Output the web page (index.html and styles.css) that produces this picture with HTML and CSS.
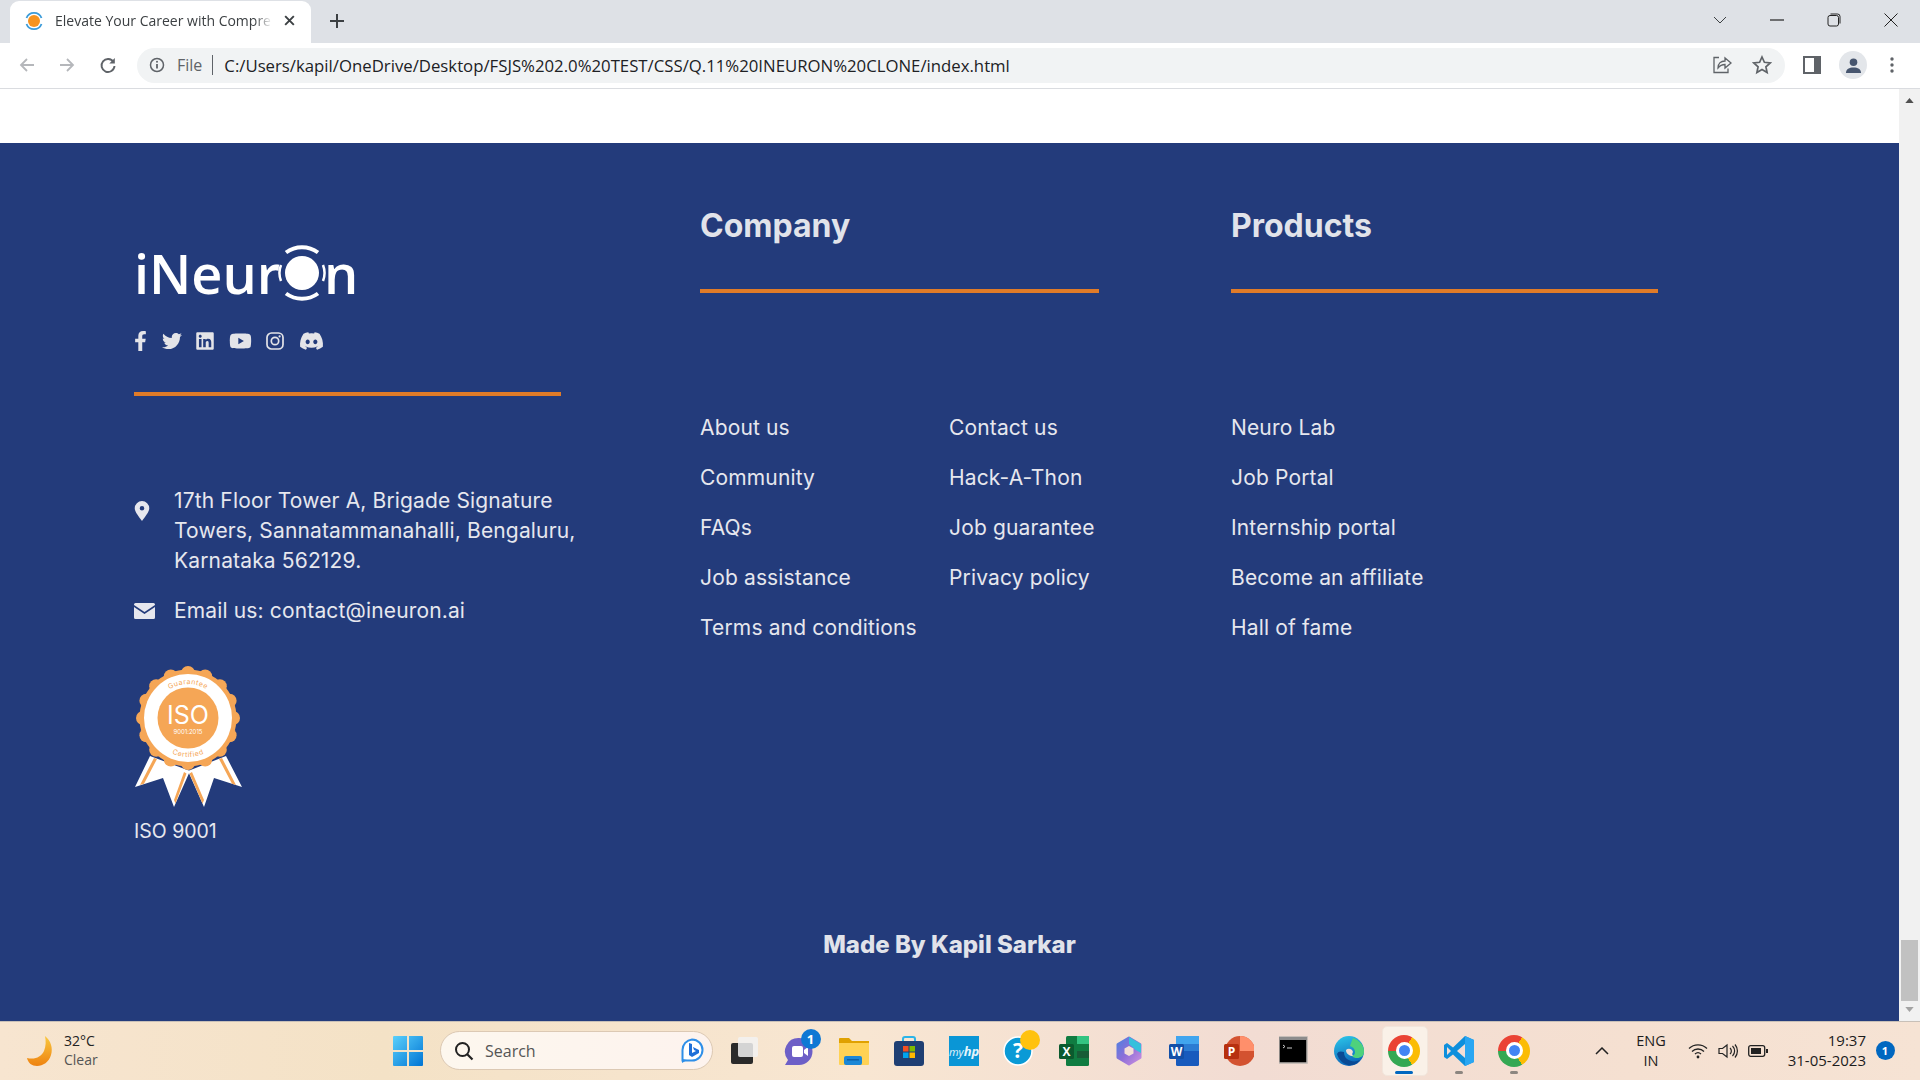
FILE: index.html
```html
<!DOCTYPE html>
<html lang="en">
<head>
<meta charset="utf-8">
<title>Elevate Your Career with Comprehensive Courses</title>
<link rel="stylesheet" href="styles.css">
</head>
<body>
<div class="tabstrip">
  <div class="tab">
    <svg class="favicon" viewBox="0 0 20 20"><circle cx="10" cy="10" r="6" fill="#f7931e"/><path d="M2.500 7A8 8 0 0 1 17.500 7M17.500 13A8 8 0 0 1 2.500 13" fill="none" stroke="#3b9bd9" stroke-width="1.800"/></svg>
    <span class="tab-title">Elevate Your Career with Compre</span>
    <svg class="tab-close" viewBox="0 0 12 12"><path d="M2 2l8 8M10 2l-8 8" stroke="#3c4043" stroke-width="1.800"/></svg>
  </div>
  <svg class="newtab" viewBox="0 0 14 14"><path d="M7 0v14M0 7h14" stroke="#3c4043" stroke-width="2"/></svg>
  <div class="win">
    <svg class="win-ico chev" viewBox="0 0 14 8"><path d="M1 1l6 6 6-6" fill="none" stroke="#3c4043"/></svg>
    <svg class="win-ico" viewBox="0 0 14 14"><path d="M0 7h14" stroke="#222" stroke-width="1.200"/></svg>
    <svg class="win-ico" viewBox="0 0 14 14"><rect x="1" y="2.500" width="10.500" height="10.500" rx="2" fill="none" stroke="#222"/><path d="M3.500 1h7a2.500 2.500 0 0 1 2.500 2.500v7" fill="none" stroke="#222"/></svg>
    <svg class="win-ico" viewBox="0 0 14 14"><path d="M0.500 0.500l13 13M13.500 0.500l-13 13" stroke="#222"/></svg>
  </div>
</div>
<div class="toolbar">
  <svg class="nav nav-back" viewBox="0 0 18 18"><path d="M16 9H3M9 3L3 9l6 6" fill="none" stroke="#b5b7bb" stroke-width="1.800"/></svg>
  <svg class="nav nav-fwd" viewBox="0 0 18 18"><path d="M2 9h13M9 3l6 6-6 6" fill="none" stroke="#b5b7bb" stroke-width="1.800"/></svg>
  <svg class="nav nav-reload" viewBox="0 0 18 18"><path d="M14.500 6A6.500 6.500 0 1 0 15.500 10" fill="none" stroke="#5f6368" stroke-width="1.900"/><path d="M15.800 2v5.500h-5.500z" fill="#5f6368"/></svg>
  <div class="omnibox">
    <svg class="info" viewBox="0 0 16 16"><circle cx="8" cy="8" r="6.500" fill="none" stroke="#5f6368" stroke-width="1.500"/><path d="M8 7v4.500" stroke="#5f6368" stroke-width="1.800"/><circle cx="8" cy="4.800" r="1" fill="#5f6368"/></svg>
    <span class="file">File</span>
    <span class="sep"></span>
    <span class="url">C:/Users/kapil/OneDrive/Desktop/FSJS%202.0%20TEST/CSS/Q.11%20INEURON%20CLONE/index.html</span>
    <svg class="omni-ico share" viewBox="0 0 20 20"><path d="M7 2.500H2v15h14v-4" fill="none" stroke="#5f6368" stroke-width="1.300"/><path d="M6 13c0-5 3-7 7-7V3l6 5-6 5V9.500C10 9.500 8 10.500 6 13z" fill="none" stroke="#5f6368" stroke-width="1.300"/></svg>
    <svg class="omni-ico star" viewBox="0 0 20 20"><path d="M10 2l2.400 5.300 5.800.6-4.300 3.900 1.200 5.700L10 14.600 4.900 17.500l1.200-5.700L1.800 7.900l5.800-.6z" fill="none" stroke="#5f6368" stroke-width="1.700"/></svg>
  </div>
  <div class="tool-right">
    <svg class="panel" viewBox="0 0 18 18"><rect width="18" height="18" fill="#5f6368"/><rect x="2" y="2" width="9" height="14" fill="#fff"/></svg>
    <div class="avatar"><svg viewBox="0 0 18 18"><circle cx="9" cy="5.500" r="4" fill="#47566f"/><path d="M1 17c0-4.500 3.500-6 8-6s8 1.500 8 6z" fill="#47566f"/></svg></div>
    <svg class="menu" viewBox="0 0 4 16"><circle cx="2" cy="2" r="1.700" fill="#5f6368"/><circle cx="2" cy="8" r="1.700" fill="#5f6368"/><circle cx="2" cy="14" r="1.700" fill="#5f6368"/></svg>
  </div>
</div>
<div class="viewport">
  <main class="page">
    <div class="page-top"></div>
    <footer class="footer">
      <div class="cols">
        <div class="col-brand">
          <div class="logo">iNeur<svg class="logo-o" viewBox="0 0 56 56"><circle cx="28" cy="28" r="17" fill="#fff"/><path d="M12 7.500A27 27 0 0 1 44 7.500M44 48.500A27 27 0 0 1 12 48.500" fill="none" stroke="#fff" stroke-width="4"/><path d="M7 20a22 22 0 0 0 0 16M49 20a22 22 0 0 1 0 16" fill="none" stroke="#fff" stroke-width="2.500"/></svg>n</div>
          <div class="social">
            <svg class="s-fb" viewBox="0 0 320 512"><path d="M279.14 288l14.22-92.66h-88.91v-60.13c0-25.35 12.42-50.06 52.24-50.06h40.42V6.26S260.43 0 225.36 0c-73.22 0-121.08 44.38-121.08 124.72v70.62H22.89V288h81.39v224h100.17V288z"/></svg>
            <svg class="s-tw" viewBox="0 0 512 512"><path d="M459.37 151.716c.325 4.548.325 9.097.325 13.645 0 138.72-105.583 298.558-298.558 298.558-59.452 0-114.68-17.219-161.137-47.106 8.447.974 16.568 1.299 25.34 1.299 49.055 0 94.213-16.568 130.274-44.832-46.132-.975-84.792-31.188-98.112-72.772 6.498.974 12.995 1.624 19.818 1.624 9.421 0 18.843-1.3 27.614-3.573-48.081-9.747-84.143-51.98-84.143-102.985v-1.299c13.969 7.797 30.214 12.67 47.431 13.319-28.264-18.843-46.781-51.005-46.781-87.391 0-19.492 5.197-37.36 14.294-52.954 51.655 63.675 129.3 105.258 216.365 109.807-1.624-7.797-2.599-15.918-2.599-24.04 0-57.828 46.782-104.934 104.934-104.934 30.213 0 57.502 12.67 76.67 33.137 23.715-4.548 46.456-13.32 66.599-25.34-7.798 24.366-24.366 44.833-46.132 57.827 21.117-2.273 41.584-8.122 60.426-16.243-14.292 20.791-32.161 39.308-52.628 54.253z"/></svg>
            <svg class="s-li" viewBox="0 0 448 512"><path d="M416 32H31.900C14.300 32 0 46.500 0 64.300v383.400C0 465.500 14.300 480 31.900 480H416c17.600 0 32-14.500 32-32.300V64.300c0-17.800-14.400-32.300-32-32.300zM135.400 416H69V202.200h66.500V416zm-33.200-243c-21.300 0-38.500-17.300-38.500-38.500S80.900 96 102.200 96c21.200 0 38.500 17.300 38.500 38.500 0 21.300-17.200 38.500-38.500 38.500zm282.100 243h-66.400V312c0-24.800-.5-56.700-34.500-56.700-34.600 0-39.900 27-39.900 54.900V416h-66.400V202.200h63.700v29.200h.9c8.900-16.800 30.600-34.500 62.900-34.500 67.200 0 79.700 44.300 79.700 101.900V416z"/></svg>
            <svg class="s-yt" viewBox="0 0 576 512"><path d="M549.655 124.083c-6.281-23.65-24.787-42.276-48.284-48.597C458.781 64 288 64 288 64S117.22 64 74.629 75.486c-23.497 6.322-42.003 24.947-48.284 48.597-11.412 42.867-11.412 132.305-11.412 132.305s0 89.438 11.412 132.305c6.281 23.65 24.787 41.5 48.284 47.821C117.22 448 288 448 288 448s170.78 0 213.371-11.486c23.497-6.321 42.003-24.171 48.284-47.821 11.412-42.867 11.412-132.305 11.412-132.305s0-89.438-11.412-132.305zm-317.51 213.508V175.185l142.739 81.205-142.739 81.201z"/></svg>
            <svg class="s-ig" viewBox="0 0 18 18"><rect x="1" y="1" width="16" height="16" rx="4.500" fill="none" stroke="#e4e4e8" stroke-width="1.700"/><circle cx="9" cy="9" r="3.700" fill="none" stroke="#e4e4e8" stroke-width="1.700"/><circle cx="13.600" cy="4.400" r="1.100" fill="#e4e4e8"/></svg>
            <svg class="s-dc" viewBox="0 0 640 512"><path d="M524.531,69.836a1.5,1.5,0,0,0-.764-.7A485.065,485.065,0,0,0,404.081,32.03a1.816,1.816,0,0,0-1.923.91,337.461,337.461,0,0,0-14.9,30.6,447.848,447.848,0,0,0-134.426,0,309.541,309.541,0,0,0-15.135-30.6,1.89,1.89,0,0,0-1.924-.91A483.689,483.689,0,0,0,116.085,69.137a1.712,1.712,0,0,0-.788.676C39.068,183.651,18.186,294.69,28.43,404.354a2.016,2.016,0,0,0,.765,1.375A487.666,487.666,0,0,0,176.02,479.918a1.9,1.9,0,0,0,2.063-.676A348.2,348.2,0,0,0,208.12,430.4a1.86,1.86,0,0,0-1.019-2.588,321.173,321.173,0,0,1-45.868-21.853,1.885,1.885,0,0,1-.185-3.126c3.082-2.309,6.166-4.711,9.109-7.137a1.819,1.819,0,0,1,1.9-.256c96.229,43.917,200.41,43.917,295.5,0a1.812,1.812,0,0,1,1.924.233c2.944,2.426,6.027,4.851,9.132,7.16a1.884,1.884,0,0,1-.162,3.126,301.407,301.407,0,0,1-45.89,21.83,1.875,1.875,0,0,0-1,2.611,391.055,391.055,0,0,0,30.014,48.815,1.864,1.864,0,0,0,2.063.7A486.048,486.048,0,0,0,610.7,405.729a1.882,1.882,0,0,0,.765-1.352C623.729,277.594,590.933,167.465,524.531,69.836ZM222.491,337.58c-28.972,0-52.844-26.587-52.844-59.239S193.056,219.1,222.491,219.1c29.665,0,53.306,26.82,52.843,59.239C275.334,310.993,251.924,337.58,222.491,337.58Zm195.38,0c-28.971,0-52.843-26.587-52.843-59.239S388.437,219.1,417.871,219.1c29.667,0,53.307,26.82,52.844,59.239C470.715,310.993,447.538,337.58,417.871,337.58Z"/></svg>
          </div>
          <div class="rule rule-brand"></div>
          <div class="contact contact-addr">
            <svg class="pin" viewBox="0 0 16 22"><path fill-rule="evenodd" d="M8 0a8 8 0 0 1 8 8c0 4-5 10-8 14C5 18 0 12 0 8a8 8 0 0 1 8-8zm0 5.500a2.500 2.500 0 1 0 0 5 2.500 2.500 0 0 0 0-5z"/></svg>
            <p>17th Floor Tower A, Brigade Signature<br>Towers, Sannatammanahalli, Bengaluru,<br>Karnataka 562129.</p>
          </div>
          <div class="contact contact-mail">
            <svg class="mail" viewBox="0 0 21 16"><path d="M1.500 0h18A1.500 1.500 0 0 1 21 1.500v.6L10.500 9 0 2.100v-.6A1.500 1.500 0 0 1 1.500 0z"/><path d="M0 4l10.500 7L21 4v10.500a1.500 1.500 0 0 1-1.500 1.500h-18A1.500 1.500 0 0 1 0 14.500z"/></svg>
            <p>Email us: contact@ineuron.ai</p>
          </div>
          <svg class="iso" viewBox="0 0 108 142">
            <path d="M16 90L1 121l28-9 11 29 16-36z" fill="#fff"/>
            <path d="M92 90l16 31-28-9-10 29-16-36z" fill="#fff"/>
            <path d="M20 92L6 119l4-1.300 13-24.700zM88 92l14 27-4-1.300-13-24.700z" fill="#f5a656"/>
            <path d="M50 106l-10 28 1.500 3.500 11-30zM58 106l12 28-1.500 3.500-13-30z" fill="#f5a656"/>
            <g fill="#f5a656">
              <circle cx="54" cy="52" r="48.500"/>
              <circle cx="54" cy="7" r="7"/><circle cx="71.200" cy="10.400" r="7"/><circle cx="85.800" cy="20.200" r="7"/><circle cx="95.600" cy="34.800" r="7"/><circle cx="99" cy="52" r="7"/><circle cx="95.600" cy="69.200" r="7"/><circle cx="85.800" cy="83.800" r="7"/><circle cx="71.200" cy="93.600" r="7"/><circle cx="54" cy="97" r="7"/><circle cx="36.800" cy="93.600" r="7"/><circle cx="22.200" cy="83.800" r="7"/><circle cx="12.400" cy="69.200" r="7"/><circle cx="9" cy="52" r="7"/><circle cx="12.400" cy="34.800" r="7"/><circle cx="22.200" cy="20.200" r="7"/><circle cx="36.800" cy="10.400" r="7"/>
            </g>
            <circle cx="54" cy="52" r="44" fill="#fff"/>
            <circle cx="54" cy="52" r="30.500" fill="#f5a656"/>
            <defs>
              <path id="arc-top" d="M20 52a34 34 0 0 1 68 0"/>
              <path id="arc-bot" d="M15 52a39 39 0 0 0 78 0"/>
            </defs>
            <text class="iso-arc"><textPath href="#arc-top" startOffset="50%" text-anchor="middle">Guarantee</textPath></text>
            <text class="iso-arc"><textPath href="#arc-bot" startOffset="50%" text-anchor="middle">Certified</textPath></text>
            <text class="iso-big" x="54" y="58" text-anchor="middle">ISO</text>
            <text class="iso-small" x="54" y="68" text-anchor="middle">9001:2015</text>
          </svg>
          <p class="iso-label">ISO 9001</p>
        </div>
        <div class="col-company">
          <h2>Company</h2>
          <div class="rule"></div>
          <div class="links links-two">
            <a>About us</a><a>Contact us</a>
            <a>Community</a><a>Hack-A-Thon</a>
            <a>FAQs</a><a>Job guarantee</a>
            <a>Job assistance</a><a>Privacy policy</a>
            <a>Terms and conditions</a>
          </div>
        </div>
        <div class="col-products">
          <h2>Products</h2>
          <div class="rule"></div>
          <div class="links">
            <a>Neuro Lab</a>
            <a>Job Portal</a>
            <a>Internship portal</a>
            <a>Become an affiliate</a>
            <a>Hall of fame</a>
          </div>
        </div>
      </div>
      <p class="made">Made By Kapil Sarkar</p>
    </footer>
  </main>
  <div class="scrollbar">
    <svg class="arrow" viewBox="0 0 10 6"><path d="M5 0l5 6H0z" fill="#505050"/></svg>
    <div class="thumb"></div>
    <svg class="arrow" viewBox="0 0 10 6"><path d="M5 6L0 0h10z" fill="#a3a3a3"/></svg>
  </div>
</div>
<div class="taskbar">
  <div class="weather">
    <svg class="moon" viewBox="0 0 28 32"><defs><linearGradient id="moon-g" x1="0" y1="0" x2="0" y2="1"><stop offset="0" stop-color="#f9c83f"/><stop offset="1" stop-color="#ee8210"/></linearGradient></defs><path d="M19 1c6 5 8 12 6 19-2 7-8 11-14 11C6 31 2 28 1 23c8 2 14-1 17-7 2-5 2-10 1-15z" fill="url(#moon-g)"/></svg>
    <div class="weather-text"><span class="temp">32°C</span><span class="cond">Clear</span></div>
  </div>
  <div class="start">
    <svg viewBox="0 0 30 30"><defs><linearGradient id="win-g" x1="0" y1="0" x2="1" y2="1"><stop offset="0" stop-color="#5ad0fb"/><stop offset="1" stop-color="#0074d4"/></linearGradient></defs><path d="M0 1a1 1 0 0 1 1-1h13v14H0zM16 0h13a1 1 0 0 1 1 1v13H16zM0 16h14v14H1a1 1 0 0 1-1-1zM16 16h14v13a1 1 0 0 1-1 1H16z" fill="url(#win-g)"/></svg>
  </div>
  <div class="search">
    <svg class="s-glass" viewBox="0 0 20 20"><circle cx="8.500" cy="8.500" r="6.500" fill="none" stroke="#222" stroke-width="2"/><path d="M13 13l5.500 5.500" stroke="#222" stroke-width="2.200"/></svg>
    <span class="s-text">Search</span>
    <svg class="s-bing" viewBox="0 0 24 26"><path d="M12 1.500a10.500 10.500 0 0 1 0 21H2.500V12A10.500 10.500 0 0 1 12 1.500z" fill="#fff" stroke="#2f8fe8" stroke-width="2"/><path d="M2 21v4l5-3z" fill="#2f8fe8"/><path d="M9 5l3 1v9l4-2-2-1-1-3 6 3v3l-7 4-3-2z" fill="#1d6fd8"/></svg>
  </div>
  <div class="apps">
    <div class="slot"><svg viewBox="0 0 30 30"><rect x="2" y="7" width="22" height="21" rx="2" fill="#2a2a2a"/><rect x="9" y="1" width="20" height="20" rx="2" fill="#f2f2f2" fill-opacity=".85"/></svg></div>
    <div class="slot"><svg viewBox="0 0 30 30"><path d="M15 2a13.500 13.500 0 0 1 0 27H1l3-5A13.500 13.500 0 0 1 15 2z" fill="#6d5fc7"/><rect x="8" y="10" width="11" height="11" rx="2" fill="#fff"/><path d="M20 14l4-3v9l-4-3z" fill="#fff"/></svg><span class="count">1</span></div>
    <div class="slot"><svg viewBox="0 0 30 30"><path d="M0 3a1 1 0 0 1 1-1h9l3 3h17v6H0z" fill="#e0a100"/><path d="M0 7h30v21a1 1 0 0 1-1 1H1a1 1 0 0 1-1-1z" fill="#ffd254"/><rect x="5" y="20" width="18" height="9" rx="2" fill="#1b87d6"/><rect x="8" y="23" width="12" height="1.500" fill="#0b5fa6"/></svg></div>
    <div class="slot"><svg viewBox="0 0 30 30"><path d="M9 7V3a2 2 0 0 1 2-2h8a2 2 0 0 1 2 2v4" fill="none" stroke="#2bb4e8" stroke-width="2"/><rect y="5" width="30" height="25" rx="3" fill="#1f3f73"/><rect x="9" y="10" width="5.500" height="5.500" fill="#f25022"/><rect x="15.500" y="10" width="5.500" height="5.500" fill="#7fba00"/><rect x="9" y="16.500" width="5.500" height="5.500" fill="#00a4ef"/><rect x="15.500" y="16.500" width="5.500" height="5.500" fill="#ffb900"/></svg></div>
    <div class="slot"><div class="myhp">my<b>hp</b></div></div>
    <div class="slot"><svg class="help" viewBox="0 0 36 36"><circle cx="17" cy="18" r="14" fill="#0a9ad6" stroke="#fff" stroke-width="1.500"/><text class="help-q" x="17" y="25" text-anchor="middle">?</text><circle cx="29" cy="7" r="10" fill="#ffc20e"/></svg></div>
    <div class="slot"><svg viewBox="0 0 30 30"><rect x="7" y="0" width="23" height="30" rx="1.500" fill="#107c41"/><rect x="18" y="0" width="12" height="8" fill="#33c481"/><rect x="18" y="15" width="12" height="7" fill="#185c37"/><rect x="0" y="8" width="15" height="15" rx="1.500" fill="#0b5a2e"/><text class="tile-l" x="7.500" y="20" text-anchor="middle">X</text></svg></div>
    <div class="slot"><svg viewBox="0 0 30 30"><defs><linearGradient id="m-g" x1="0" y1="0" x2="1" y2="1"><stop offset="0" stop-color="#4f7fe0"/><stop offset=".5" stop-color="#8f6fd8"/><stop offset="1" stop-color="#c98fe0"/></linearGradient></defs><path d="M15 2l11 6.500v13L15 28 4 21.500v-13z" fill="url(#m-g)" stroke="url(#m-g)" stroke-width="3" stroke-linejoin="round"/><path d="M15 1l12 7v9l-6-3.500-6-5.500z" fill="#35c0dc"/><path d="M15 10l4.500 2.500v5L15 20l-4.500-2.500v-5z" fill="#f3ded6"/></svg></div>
    <div class="slot"><svg viewBox="0 0 30 30"><rect x="7" y="0" width="23" height="30" rx="1.500" fill="#185abd"/><rect x="7" y="0" width="23" height="8" fill="#41a5ee"/><rect x="7" y="8" width="23" height="7" fill="#2b7cd3"/><rect x="0" y="8" width="15" height="15" rx="1.500" fill="#124fa8"/><text class="tile-l" x="7.500" y="20" text-anchor="middle">W</text></svg></div>
    <div class="slot"><svg viewBox="0 0 30 30"><circle cx="16" cy="15" r="15" fill="#d35230"/><path d="M16 0a15 15 0 0 1 15 15H16z" fill="#ff8f6b"/><rect x="0" y="8" width="15" height="15" rx="1.500" fill="#b7300f"/><text class="tile-l" x="7.500" y="20" text-anchor="middle">P</text></svg></div>
    <div class="slot"><svg viewBox="0 0 30 30"><rect y="1" width="28" height="26" fill="#000" stroke="#b9b4b0" stroke-width="1.500"/><rect y="1" width="28" height="3" fill="#8c8c8c"/><path d="M4 9l2 1.500L4 12M8 12h5" stroke="#ccc" fill="none"/></svg></div>
    <div class="slot"><svg viewBox="0 0 30 30"><defs><linearGradient id="edge-g" x1="0.200" y1="0" x2="0.500" y2="1"><stop offset="0" stop-color="#2cc4e8"/><stop offset="1" stop-color="#0b62b8"/></linearGradient></defs><circle cx="15" cy="15" r="15" fill="url(#edge-g)"/><path d="M19 2c6 2 11 7 11 13 0 5-3 7-7 7-2 0-4-.5-5-2 2-1 3-2 3-4 0-3-2-5-5-6 1-3 2-6 3-8z" fill="#4ed17c"/><path d="M12 14c2-2 6-1.500 7 2-1 1-1 3 0 4-3 0-7-2-7-6z" fill="#f3ded6"/><path d="M3 18c2 7 8 12 15 11 3-.5 6-2 8-5-4 2-9 2-13-1-2-1.500-3-4-3-7-3-1-6-1-7 2z" fill="#0a4a94"/></svg></div>
    <div class="slot slot-active"><div class="chrome"><span></span></div><i class="run run-on"></i></div>
    <div class="slot"><svg viewBox="0 0 30 30"><path d="M21 0l9 4v22l-9 4-12-11.500L3 23l-3-2v-12l3-2 6 4.500z" fill="#0e8fdc"/><path d="M21 0l9 4v22l-9 4z" fill="#2aa6f2"/><path d="M21 8l-8 7 8 7z" fill="#f3ded6"/><path d="M3 11l4 4-4 4z" fill="#f3ded6"/></svg><i class="run"></i></div>
    <div class="slot"><div class="chrome"><span></span></div><i class="run"></i></div>
  </div>
  <div class="tray">
    <div class="t-chev"><svg viewBox="0 0 14 8"><path d="M1 7l6-6 6 6" fill="none" stroke="#222" stroke-width="1.500"/></svg></div>
    <div class="t-lang"><span>ENG</span><span>IN</span></div>
    <div class="t-ico"><svg viewBox="0 0 20 16"><path d="M1 5.500a13 13 0 0 1 18 0M4 8.500a8.500 8.500 0 0 1 12 0M7 11a4.500 4.500 0 0 1 6 0" fill="none" stroke="#222" stroke-width="1.300"/><circle cx="10" cy="14" r="1.400" fill="#222"/></svg></div>
    <div class="t-ico"><svg viewBox="0 0 20 16"><path d="M1 5.500h3.500L9 2v12l-4.500-3.500H1z" fill="none" stroke="#222" stroke-width="1.200"/><path d="M12 5a4 4 0 0 1 0 6M14.500 3a7 7 0 0 1 0 10M17 1.500a10 10 0 0 1 0 13" fill="none" stroke="#222" stroke-width="1.200"/></svg></div>
    <div class="t-ico"><svg viewBox="0 0 20 12"><rect x=".7" y=".7" width="16" height="10.600" rx="2" fill="none" stroke="#222" stroke-width="1.300"/><rect x="3" y="3" width="10" height="6" fill="#222"/><rect x="18" y="4" width="2" height="4" fill="#222"/></svg></div>
    <div class="t-clock"><span>19:37</span><span>31-05-2023</span></div>
    <div class="t-note"><span>1</span></div>
  </div>
</div>
</body>
</html>
```
FILE: styles.css
```css
* { box-sizing: border-box; }
html, body { margin: 0; height: 100%; overflow: hidden; }
body { width: 1920px; height: 1080px; display: flex; flex-direction: column; font-family: "Inter", "Liberation Sans", sans-serif; background: #fff; }
p, h2 { margin: 0; }
svg { display: block; }

.tabstrip { height: 43px; background: #dee1e6; display: flex; align-items: center; flex: none; padding-bottom: 2px; }
.tab { width: 301px; height: 42px; margin: 1px 0 -2px 10px; align-self: flex-start; background: #fff; border-radius: 9px 9px 0 0; display: flex; align-items: center; padding: 0 14px 3px 14px; }
.favicon { width: 20px; height: 20px; flex: none; }
.tab-title { margin-left: 11px; width: 217px; white-space: nowrap; font: 14px "Open Sans", sans-serif; color: #3c4043; -webkit-mask-image: linear-gradient(90deg, #000 92%, transparent); mask-image: linear-gradient(90deg, #000 92%, transparent); }
.tab-close { width: 13px; height: 13px; margin-left: 11px; flex: none; }
.newtab { width: 14px; height: 14px; margin-left: 19px; }
.win { margin-left: auto; display: flex; align-items: center; padding: 0 22px 2px 0; }
.win-ico { width: 14px; height: 14px; margin-left: 43px; }
.chev { height: 8px; }

.toolbar { height: 46px; flex: none; background: #fff; border-bottom: 1px solid #dadce0; display: flex; align-items: center; padding-bottom: 1px; }
.nav { width: 18px; height: 18px; flex: none; }
.nav-back { margin-left: 18px; }
.nav-fwd { margin-left: 22px; }
.nav-reload { margin-left: 23px; }
.omnibox { width: 1648px; height: 35px; margin-left: 20px; background: #f1f3f4; border-radius: 18px; display: flex; align-items: center; padding-left: 12px; }
.info { width: 16px; height: 16px; flex: none; }
.file { margin-left: 12px; font: 16px "Open Sans", sans-serif; color: #5f6368; }
.sep { width: 1px; height: 20px; background: #5f6368; margin-left: 10px; }
.url { margin-left: 11px; font: 16.750px "Open Sans", sans-serif; color: #202124; white-space: nowrap; }
.omni-ico { width: 20px; height: 20px; flex: none; }
.share { margin-left: auto; }
.star { margin: 0 13px 0 20px; }
.tool-right { display: flex; align-items: center; }
.panel { width: 18px; height: 18px; margin-left: 18px; }
.avatar { width: 28px; height: 28px; margin-left: 18px; border-radius: 50%; background: #e3e6ea; display: flex; align-items: center; justify-content: center; }
.avatar svg { width: 17px; height: 17px; }
.menu { width: 4px; height: 16px; margin-left: 23px; }

.viewport { flex: 1; display: flex; min-height: 0; }
.page { flex: 1; display: flex; flex-direction: column; min-width: 0; }
.page-top { height: 54px; background: #fff; flex: none; }
.footer { flex: 1; background: #233b7b; color: #e6e7ee; padding: 61px 0 0 134px; }
.cols { display: grid; grid-template-columns: 566px 531px 1fr; }
.logo { margin-top: 39px; height: 60px; display: flex; align-items: center; font: 600 54px/60px "Open Sans", sans-serif; color: #fff; }
.logo-o { width: 56px; height: 56px; margin: 0 -6px; }
.social { margin-top: 27px; height: 22px; display: flex; align-items: center; }
.social svg { fill: #e4e4e8; height: 20px; flex: none; }
.s-fb { width: 13px; }
.s-tw { width: 20px; margin-left: 15px; }
.s-li { width: 18px; margin-left: 14px; }
.s-yt { width: 23px; margin-left: 15px; }
.s-ig { width: 18px; height: 18px !important; margin-left: 14px; }
.s-dc { width: 25px; margin-left: 15px; }
.rule { height: 4px; background: #e07b28; width: 399px; }
.col-products .rule, .rule-brand { width: 427px; }
.rule-brand { margin-top: 40px; }
.contact { display: flex; font-size: 21px; line-height: 30px; letter-spacing: .15px; }
.contact-addr { margin-top: 90px; align-items: flex-start; }
.contact-mail { margin-top: 20px; align-items: center; }
.pin { width: 16px; height: 20px; fill: #e6e7ee; margin: 15px 24px 0 0; flex: none; }
.mail { width: 21px; height: 16px; fill: #e6e7ee; margin-right: 19px; flex: none; }
.iso { width: 108px; height: 142px; margin-top: 40px; overflow: visible; }
.iso-arc { font: 7px "Inter", sans-serif; fill: #f5a656; letter-spacing: .5px; }
.iso-big { font: 25px "Inter", sans-serif; fill: #fff; }
.iso-small { font: 6px "Inter", sans-serif; fill: #fff; }
.iso-label { margin-top: 8px; font-size: 19.500px; line-height: 30px; }
.col-company, .col-products { padding-top: 1px; }
.col-company h2, .col-products h2 { font-size: 32px; line-height: 42px; font-weight: 700; color: #e1e3ea; margin-bottom: 42px; }
.links { margin-top: 120px; display: flex; flex-direction: column; gap: 20px; font-size: 21px; line-height: 30px; letter-spacing: .15px; }
.links-two { display: grid; grid-template-columns: 249px 1fr; gap: 20px 0; }
.made { margin: 81px 134px 0 0; text-align: center; font-size: 24px; line-height: 36px; font-weight: 800; color: #e1e3ea; }

.scrollbar { width: 21px; background: #f1f1f1; display: flex; flex-direction: column; align-items: center; flex: none; }
.arrow { width: 9px; height: 5px; flex: none; }
.arrow:first-child { margin-top: 9px; }
.thumb { width: 17px; height: 61px; background: #c1c1c1; margin: auto 0 6px; }
.scrollbar .arrow:last-child { margin-bottom: 9px; }

.taskbar { height: 59px; flex: none; border-top: 1px solid #c8c0b8; padding-bottom: 1px; background: linear-gradient(90deg, #f7e5d0 0%, #f4e2c6 20%, #f8e6d2 45%, #f2dcd3 65%, #f5e0d1 85%, #f6e3d4 100%); display: flex; align-items: center; }
.weather { width: 380px; display: flex; align-items: center; padding-left: 26px; flex: none; }
.moon { width: 28px; height: 32px; }
.weather-text { margin: -2px 0 0 10px; display: flex; flex-direction: column; font: 14px/19px "Open Sans", sans-serif; }
.temp { color: #222; }
.cond { color: #555; }
.start { width: 56px; display: flex; justify-content: center; flex: none; }
.start svg { width: 30px; height: 30px; }
.search { width: 273px; height: 39px; margin-left: 4px; border-radius: 20px; background: linear-gradient(90deg, #fdf7ee, #fdf3ee); border: 1px solid #dcc9b4; display: flex; align-items: center; padding: 0 8px 0 13px; flex: none; }
.s-glass { width: 20px; height: 20px; }
.s-text { margin-left: 11px; font: 16px "Open Sans", sans-serif; color: #555; }
.s-bing { width: 24px; height: 26px; margin-left: auto; }
.apps { display: flex; margin-left: 3.500px; flex: none; }
.slot { width: 55px; height: 57px; position: relative; display: flex; align-items: center; justify-content: center; }
.slot > svg { width: 30px; height: 30px; position: relative; }
.slot > svg.help { width: 36px; height: 36px; overflow: visible; }
.count { position: absolute; top: 7px; left: 29px; width: 20px; height: 20px; border-radius: 50%; background: #0f78d4; color: #fff; font: 700 13px/20px "Open Sans", sans-serif; text-align: center; }
.myhp { width: 30px; height: 30px; background: #0a96d6; color: #e6f5fb; font: italic 11px/30px "Open Sans", sans-serif; text-align: center; }
.myhp b { font-weight: 700; font-size: 13px; }
.help-q { font: 700 21px "Open Sans", sans-serif; fill: #fff; }
.tile-l { font: 700 12px "Open Sans", sans-serif; fill: #fff; }
.slot-active::before { content: ""; position: absolute; left: 5px; top: 4px; width: 44px; height: 48px; background: #faf1e8; border: 1px solid #f2e6dc; border-radius: 5px; }
.chrome { position: relative; width: 32px; height: 32px; border-radius: 50%; background: conic-gradient(from 30deg, #fbbc04 0 120deg, #34a853 120deg 240deg, #ea4335 240deg 360deg); display: flex; align-items: center; justify-content: center; }
.chrome span { border-radius: 50%; background: #4285f4; border: 3px solid #fff; box-sizing: content-box; width: 11px; height: 11px; }
.run { position: absolute; bottom: 5px; left: 50%; margin-left: -4px; width: 8px; height: 3px; border-radius: 2px; background: #8c8680; }
.run-on { width: 18px; margin-left: -9px; background: #0067c0; }
.tray { margin-left: auto; margin-right: 16px; display: flex; align-items: center; flex: none; color: #1c1c1c; font: 15px/20px "Open Sans", sans-serif; }
.t-chev { width: 34px; display: flex; justify-content: center; }
.t-chev svg { width: 14px; height: 8px; }
.t-lang { width: 64px; display: flex; flex-direction: column; align-items: center; font-size: 14.500px; }
.t-ico { width: 30px; display: flex; justify-content: center; }
.t-ico svg { width: 20px; height: 16px; }
.t-clock { width: 93px; margin-top: -2px; display: flex; flex-direction: column; align-items: flex-end; }
.t-note { width: 38px; display: flex; justify-content: center; }
.t-note span { width: 19px; height: 19px; border-radius: 50%; background: #0067c0; color: #fff; font: 700 11px/19px "Open Sans", sans-serif; text-align: center; }
```
